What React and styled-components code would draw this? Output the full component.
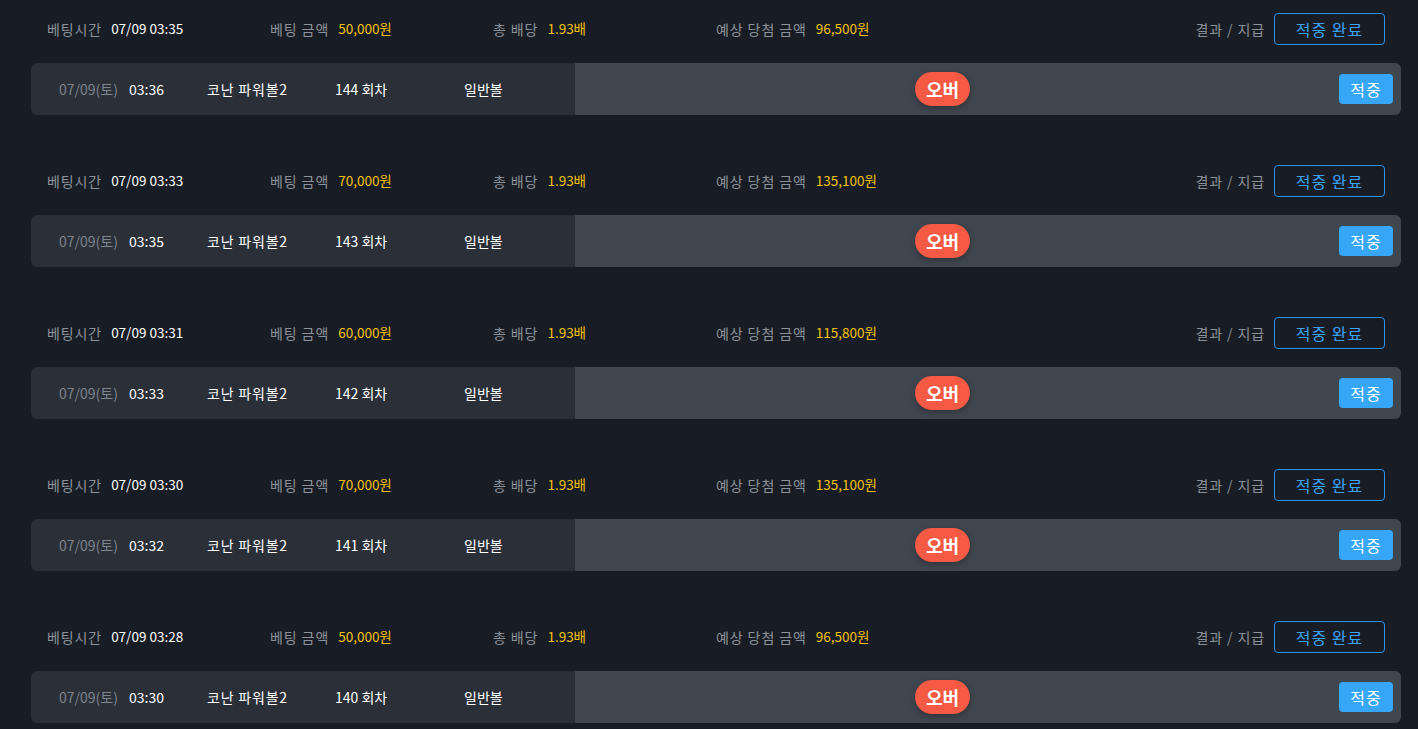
import React from 'react';
import styled, { createGlobalStyle } from 'styled-components';

const GlobalStyle = createGlobalStyle`
  html, body {
    margin: 0;
    padding: 0;
    background: #181d25;
    font-family: "Noto Sans CJK KR", "Noto Sans", sans-serif;
  }
`;

const List = styled.div`
  padding: 0 17px 0 31px;
`;

const Block = styled.div`
  padding-top: 13px;
  padding-bottom: 37px;
`;

const Header = styled.div`
  display: flex;
  align-items: center;
  height: 32px;
  padding: 0 16px;
  margin-bottom: 18px;
  font-size: 14px;
  line-height: 1;
`;

const Field = styled.div`
  width: 223px;
  display: flex;
  align-items: center;
  gap: 9px;
  white-space: nowrap;
`;

const Label = styled.span`
  color: #8d929a;
  letter-spacing: 0.9px;
`;

const Value = styled.span`
  color: ${p => (p.$gold ? '#f4c20d' : '#ffffff')};
  font-size: 13.5px;
`;

const Result = styled.div`
  margin-left: auto;
  display: flex;
  align-items: center;
  gap: 9px;
`;

const DoneButton = styled.button`
  width: 111px;
  height: 32px;
  background: transparent;
  border: 1px solid #2f8fe6;
  border-radius: 4px;
  color: #3da2f2;
  font-family: inherit;
  font-size: 16px;
  letter-spacing: 1px;
  padding: 0;
`;

const Row = styled.div`
  display: flex;
  height: 52px;
  border-radius: 6px;
  overflow: hidden;
  font-size: 14px;
  line-height: 1;
`;

const Info = styled.div`
  width: 544px;
  background: #2a2f38;
  display: flex;
  align-items: center;
  padding-left: 28px;
  box-sizing: border-box;
`;

const Cell = styled.span`
  width: ${p => p.$w}px;
  color: ${p => (p.$muted ? '#7f848c' : '#ffffff')};
  letter-spacing: ${p => (p.$wide ? '0.8px' : '0')};
  white-space: nowrap;
`;

const Pick = styled.div`
  flex: 1;
  background: #40464f;
  display: flex;
  align-items: center;
  padding-left: 340px;
  padding-right: 8px;
`;

const Pill = styled.span`
  height: 34px;
  padding: 0 11px;
  border-radius: 17px;
  background: #f65a45;
  color: #fff;
  font-weight: 700;
  font-size: 18px;
  display: flex;
  align-items: center;
  box-shadow: 0 2px 6px rgba(0, 0, 0, 0.3);
`;

const HitButton = styled.span`
  margin-left: auto;
  width: 54px;
  height: 30px;
  border-radius: 4px;
  background: #36a6f7;
  color: #fff;
  font-size: 16px;
  letter-spacing: 1px;
  display: flex;
  align-items: center;
  justify-content: center;
`;

const bets = [
  { bet: '07/09 03:35', amount: '50,000원', win: '96,500원', date: '07/09(토)', time: '03:36', round: 144 },
  { bet: '07/09 03:33', amount: '70,000원', win: '135,100원', date: '07/09(토)', time: '03:35', round: 143 },
  { bet: '07/09 03:31', amount: '60,000원', win: '115,800원', date: '07/09(토)', time: '03:33', round: 142 },
  { bet: '07/09 03:30', amount: '70,000원', win: '135,100원', date: '07/09(토)', time: '03:32', round: 141 },
  { bet: '07/09 03:28', amount: '50,000원', win: '96,500원', date: '07/09(토)', time: '03:30', round: 140 },
];

const App = () => (
  <>
    <GlobalStyle />
    <List>
      {bets.map(b => (
        <Block key={b.round}>
          <Header>
            <Field><Label>베팅시간</Label><Value>{b.bet}</Value></Field>
            <Field><Label>베팅 금액</Label><Value $gold>{b.amount}</Value></Field>
            <Field><Label>총 배당</Label><Value $gold>1.93배</Value></Field>
            <Field><Label>예상 당첨 금액</Label><Value $gold>{b.win}</Value></Field>
            <Result>
              <Label>결과 / 지급</Label>
              <DoneButton>적중 완료</DoneButton>
            </Result>
          </Header>
          <Row>
            <Info>
              <Cell $w={70} $muted>{b.date}</Cell>
              <Cell $w={78}>{b.time}</Cell>
              <Cell $w={128} $wide>코난 파워볼2</Cell>
              <Cell $w={129}>{b.round} 회차</Cell>
              <Cell $w={80}>일반볼</Cell>
            </Info>
            <Pick>
              <Pill>오버</Pill>
              <HitButton>적중</HitButton>
            </Pick>
          </Row>
        </Block>
      ))}
    </List>
  </>
);

export default App;
